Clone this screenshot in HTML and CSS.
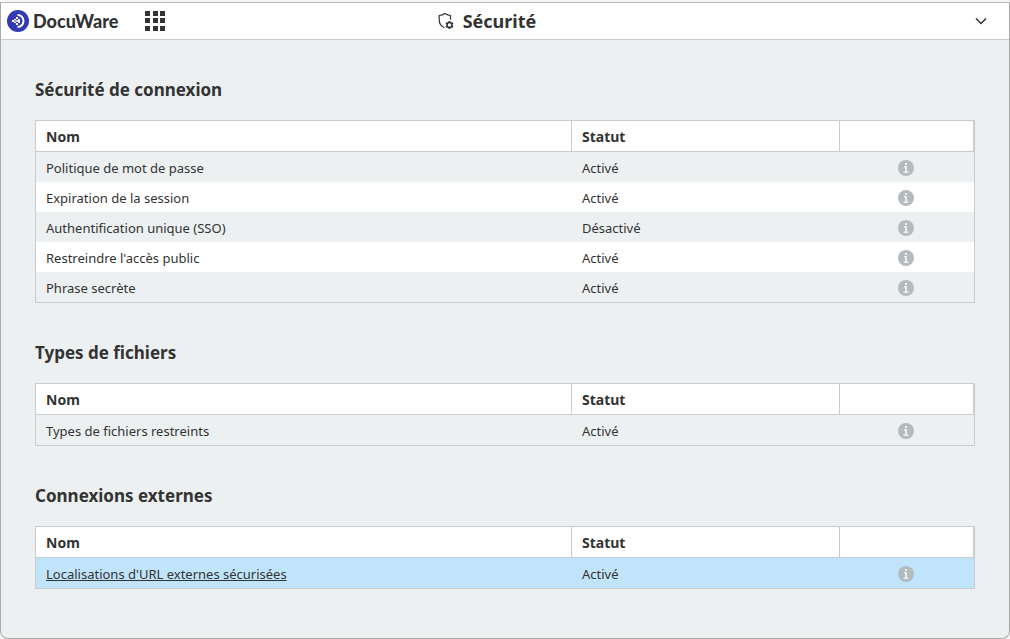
FILE: index.html
```html
<!DOCTYPE html>
<html lang="fr">
<head>
    <meta charset="utf-8">
    <meta name="viewport" content="width=device-width, initial-scale=1.0">
    <title>Sécurité</title>
    <link rel="stylesheet" href="styles.css">
</head>
<body>
    <!-- shared info icon -->
    <svg class="defs" width="0" height="0" aria-hidden="true">
        <symbol id="info" viewBox="0 0 16 16">
            <circle cx="8" cy="8" r="8" fill="#b4bbbe"/>
            <path class="info-mark" d="M7 3h2v2H7zM6 6h3v5.500h1.500V13h-5v-1.500H7v-4H6z"/>
        </symbol>
    </svg>

    <div class="window">
        <header class="topbar">
            <div class="topbar-left">
                <a class="brand" href="#">
                    <svg class="logo" viewBox="0 0 22 22" width="22" height="22" aria-hidden="true">
                        <circle cx="11" cy="11" r="11" fill="#3439b4"/>
                        <path d="M10.500 5c3.500 0 6 2.800 6 6s-2.500 6-6 6" fill="none" stroke="#fff" stroke-width="2"/>
                        <path d="M9 7h2v2H9zM11 9h2v4h-2zM9 13h2v2H9zM7 9h2v1.500H7zM5 10h2v2H5zM7 11.500h2V13H7zM9 10.200h2v1.600H9z" fill="#fff"/>
                    </svg>
                    <span>DocuWare</span>
                </a>
                <button class="icon-btn" type="button" aria-label="Applications">
                    <svg viewBox="0 0 21 20" width="21" height="20" fill="#333">
                        <path d="M0 0h5v5H0zM8 0h5v5H8zM15 0h5v5h-5zM0 7h5v5H0zM8 7h5v5H8zM15 7h5v5h-5zM0 15h5v5H0zM8 15h5v5H8zM15 15h5v5h-5z"/>
                    </svg>
                </button>
            </div>
            <h1 class="page-title">
                <svg viewBox="0 0 16 18" width="16" height="18" fill="none" stroke="#333" aria-hidden="true">
                    <path d="M12.500 7.500V3.500C10 3.300 8.500 2.500 6.800 1.500 5.500 2.500 3.500 3.300 1.200 3.500V8c0 3.700 2 6.300 5.300 7.800" stroke-width="1.200"/>
                    <circle cx="11.500" cy="13" r="2.500" stroke-width="1.500"/>
                    <path d="M11.500 9v1.500M11.500 15.500V17M8 11l1.300.8M13.700 14.200l1.300.8M8 15l1.300-.8M13.700 11.800L15 11" stroke-width="1.800"/>
                </svg>
                <span>Sécurité</span>
            </h1>
            <button class="icon-btn toggle" type="button" aria-label="Menu">
                <svg viewBox="0 0 12 8" width="12" height="8" fill="none" stroke="#333" stroke-width="1.500">
                    <path d="M1 1.500l5 5 5-5"/>
                </svg>
            </button>
        </header>

        <main class="content">
            <section>
                <h2 id="login">Sécurité de connexion</h2>
                <table class="grid" aria-labelledby="login">
                    <thead>
                        <tr><th class="col-name">Nom</th><th class="col-status">Statut</th><th class="col-info"></th></tr>
                    </thead>
                    <tbody>
                        <tr>
                            <td><a href="#">Politique de mot de passe</a></td>
                            <td>Activé</td>
                            <td><button class="info" type="button" aria-label="Info"><svg width="16" height="16"><use href="#info"/></svg></button></td>
                        </tr>
                        <tr>
                            <td><a href="#">Expiration de la session</a></td>
                            <td>Activé</td>
                            <td><button class="info" type="button" aria-label="Info"><svg width="16" height="16"><use href="#info"/></svg></button></td>
                        </tr>
                        <tr>
                            <td><a href="#">Authentification unique (SSO)</a></td>
                            <td>Désactivé</td>
                            <td><button class="info" type="button" aria-label="Info"><svg width="16" height="16"><use href="#info"/></svg></button></td>
                        </tr>
                        <tr>
                            <td><a href="#">Restreindre l'accès public</a></td>
                            <td>Activé</td>
                            <td><button class="info" type="button" aria-label="Info"><svg width="16" height="16"><use href="#info"/></svg></button></td>
                        </tr>
                        <tr>
                            <td><a href="#">Phrase secrète</a></td>
                            <td>Activé</td>
                            <td><button class="info" type="button" aria-label="Info"><svg width="16" height="16"><use href="#info"/></svg></button></td>
                        </tr>
                    </tbody>
                </table>
            </section>

            <section>
                <h2 id="files">Types de fichiers</h2>
                <table class="grid" aria-labelledby="files">
                    <thead>
                        <tr><th class="col-name">Nom</th><th class="col-status">Statut</th><th class="col-info"></th></tr>
                    </thead>
                    <tbody>
                        <tr>
                            <td><a href="#">Types de fichiers restreints</a></td>
                            <td>Activé</td>
                            <td><button class="info" type="button" aria-label="Info"><svg width="16" height="16"><use href="#info"/></svg></button></td>
                        </tr>
                    </tbody>
                </table>
            </section>

            <section>
                <h2 id="external">Connexions externes</h2>
                <table class="grid" aria-labelledby="external">
                    <thead>
                        <tr><th class="col-name">Nom</th><th class="col-status">Statut</th><th class="col-info"></th></tr>
                    </thead>
                    <tbody>
                        <tr class="active">
                            <td><a href="#">Localisations d'URL externes sécurisées</a></td>
                            <td>Activé</td>
                            <td><button class="info" type="button" aria-label="Info"><svg width="16" height="16"><use href="#info"/></svg></button></td>
                        </tr>
                    </tbody>
                </table>
            </section>
        </main>
    </div>
</body>
</html>
```
FILE: styles.css
```css
* {
    box-sizing: border-box;
}

body {
    margin: 0;
    padding: 2px 0 0;
    min-height: 100vh;
    display: flex;
    background: #f5f5f5;
    color: #333;
    font-family: Tahoma, "Noto Sans", sans-serif;
    font-size: 13px;
    line-height: 20px;
}

.defs {
    position: absolute;
}

.window {
    flex: 1;
    background: #ecf0f1;
    border: 1px solid #aaa;
    border-top-color: #bbb;
    border-radius: 0 0 8px 8px;
    overflow: hidden;
}

/* Top bar */
.topbar {
    display: grid;
    grid-template-columns: 1fr auto 1fr;
    align-items: center;
    height: 37px;
    padding: 0 22px 0 6px;
    background: #fff;
    border-bottom: 1px solid #c8cccf;
}

.topbar-left {
    display: flex;
    align-items: center;
    gap: 27px;
}

.brand {
    display: flex;
    align-items: center;
    gap: 4px;
    color: #333;
    font-family: Lato, sans-serif;
    font-size: 18px;
    font-weight: 900;
    text-decoration: none;
}

.icon-btn,
.info {
    display: flex;
    padding: 0;
    border: none;
    background: none;
    cursor: pointer;
}

.toggle {
    justify-self: end;
}

.page-title {
    display: flex;
    align-items: center;
    gap: 9px;
    margin: 0;
    padding-right: 20px;
    font-size: 18px;
    font-weight: bold;
}

/* Content */
.content {
    display: flex;
    flex-direction: column;
    gap: 38px;
    padding: 38px 34px;
}

h2 {
    margin: 0 0 18px;
    font-size: 17px;
    line-height: 24px;
}

.grid {
    width: 100%;
    table-layout: fixed;
    border: 1px solid #c8cccf;
    border-spacing: 0;
}

th,
td {
    height: 30px;
    padding: 2px 10px 0;
    border-right: 1px solid transparent;
    text-align: left;
}

th {
    height: 31px;
    background: #fff;
    border-right-color: #c8cccf;
    border-bottom: 1px solid #c8cccf;
    font-size: 14px;
}

.col-name { width: 57.1428%; }
.col-status { width: 28.5714%; }

tbody tr:nth-child(even) {
    background: #fff;
}

td a {
    color: inherit;
    text-decoration: none;
}

.info {
    margin: 0 auto;
}

.info-mark {
    fill: #ecf0f1;
}

.active {
    background: #c0e4fa;
}

.active .info-mark {
    fill: #c0e4fa;
}

.active a,
td a:hover {
    text-decoration: underline;
}
```
